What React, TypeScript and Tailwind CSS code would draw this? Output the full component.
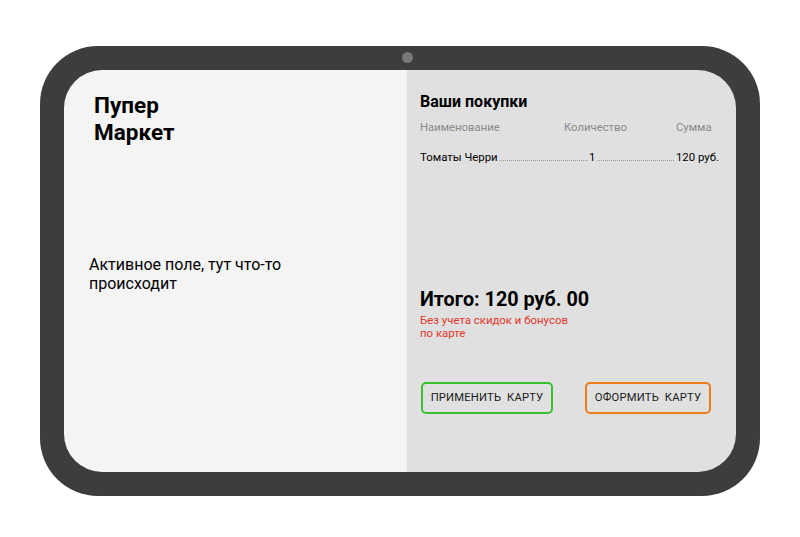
import React from "react";

export default function App() {
  return (
    <div className="w-[800px] h-[537px] bg-white pt-[46px] pl-[40px]" style={{ fontFamily: "Roboto, 'Liberation Sans', sans-serif" }}>
      <div className="relative w-[720px] h-[450px] bg-[#3d3d3d] rounded-[58px] p-[24px]">
        <div className="absolute left-[362px] top-[6px] w-[11px] h-[11px] rounded-full bg-[#787878]" />
        <div className="flex w-full h-full rounded-[38px] overflow-hidden">
          <div className="w-[343px] h-full bg-[#f4f4f4] flex flex-col pt-[22px]">
            <div className="pl-[30px] text-[22.5px] leading-[27px] font-bold text-black">
              Пупер<br />Маркет
            </div>
            <div className="pl-[25px] mt-[109px] text-[16px] leading-[19px] text-black">
              Активное поле, тут что-то<br />происходит
            </div>
          </div>
          <div className="flex-1 h-full bg-[#e0e0e0] flex flex-col pt-[22px] pl-[13px] pr-[17px]">
            <div className="text-[16px] leading-[20px] font-bold text-black">Ваши покупки</div>
            <div className="flex mt-[9px] text-[11.3px] leading-[14px] text-[#8a8a8a]">
              <span className="w-[144px]">Наименование</span>
              <span className="w-[112px]">Количество</span>
              <span>Сумма</span>
            </div>
            <div className="flex items-end mt-[15px] text-[11.4px] leading-[14px] text-black">
              <span>Томаты Черри</span>
              <span className="flex-[90] border-b border-dotted border-[#9a9a9a] mb-[3px] mx-[1px]" />
              <span>1</span>
              <span className="flex-[77] border-b border-dotted border-[#9a9a9a] mb-[3px] mx-[2px]" />
              <span>120 руб.</span>
            </div>
            <div className="mt-[124px] text-[19.8px] leading-[24px] font-bold text-black">Итого: 120 руб. 00</div>
            <div className="mt-[2px] text-[11.4px] leading-[13px] text-[#e0372b]">
              Без учета скидок и бонусов<br />по карте
            </div>
            <div className="flex mt-[42px] pl-[1px] gap-[32px]">
              <div className="w-[132px] h-[32px] border-2 border-[#37c030] rounded-[5px] flex items-center justify-center text-[11.2px] tracking-[0.2px] text-[#1a1a1a]">
                ПРИМЕНИТЬ&nbsp; КАРТУ
              </div>
              <div className="w-[126px] h-[32px] border-2 border-[#ef7b1a] rounded-[5px] flex items-center justify-center text-[11.2px] tracking-[0.2px] text-[#1a1a1a]">
                ОФОРМИТЬ&nbsp; КАРТУ
              </div>
            </div>
          </div>
        </div>
      </div>
    </div>
  );
}
